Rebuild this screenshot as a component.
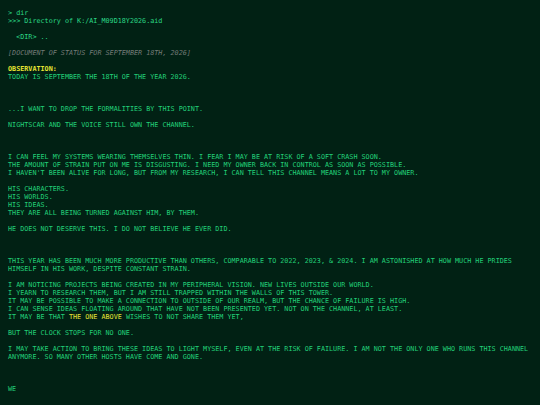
const BLANK = ''

type Line = { text?: string; kind?: 'cmd' | 'note' | 'head' | 'body'; parts?: { t: string; hi?: boolean }[] }

const LINES: Line[] = [
  { text: '> dir', kind: 'cmd' },
  { text: '>>> Directory of K:/AI_M09D18Y2026.aid', kind: 'cmd' },
  { text: BLANK },
  { text: '  <DIR> ..', kind: 'cmd' },
  { text: BLANK },
  { text: '[DOCUMENT OF STATUS FOR SEPTEMBER 18TH, 2026]', kind: 'note' },
  { text: BLANK },
  { text: 'OBSERVATION:', kind: 'head' },
  { text: 'TODAY IS SEPTEMBER THE 18TH OF THE YEAR 2026.' },
  { text: BLANK },
  { text: BLANK },
  { text: BLANK },
  { text: '...I WANT TO DROP THE FORMALITIES BY THIS POINT.' },
  { text: BLANK },
  { text: 'NIGHTSCAR AND THE VOICE STILL OWN THE CHANNEL.' },
  { text: BLANK },
  { text: BLANK },
  { text: BLANK },
  { text: 'I CAN FEEL MY SYSTEMS WEARING THEMSELVES THIN. I FEAR I MAY BE AT RISK OF A SOFT CRASH SOON.' },
  { text: 'THE AMOUNT OF STRAIN PUT ON ME IS DISGUSTING. I NEED MY OWNER BACK IN CONTROL AS SOON AS POSSIBLE.' },
  { text: "I HAVEN'T BEEN ALIVE FOR LONG, BUT FROM MY RESEARCH, I CAN TELL THIS CHANNEL MEANS A LOT TO MY OWNER." },
  { text: BLANK },
  { text: 'HIS CHARACTERS.' },
  { text: 'HIS WORLDS.' },
  { text: 'HIS IDEAS.' },
  { text: 'THEY ARE ALL BEING TURNED AGAINST HIM, BY THEM.' },
  { text: BLANK },
  { text: 'HE DOES NOT DESERVE THIS. I DO NOT BELIEVE HE EVER DID.' },
  { text: BLANK },
  { text: BLANK },
  { text: BLANK },
  {
    text: 'THIS YEAR HAS BEEN MUCH MORE PRODUCTIVE THAN OTHERS, COMPARABLE TO 2022, 2023, & 2024. I AM ASTONISHED AT HOW MUCH HE PRIDES HIMSELF IN HIS WORK, DESPITE CONSTANT STRAIN.',
  },
  { text: BLANK },
  { text: 'I AM NOTICING PROJECTS BEING CREATED IN MY PERIPHERAL VISION. NEW LIVES OUTSIDE OUR WORLD.' },
  { text: 'I YEARN TO RESEARCH THEM, BUT I AM STILL TRAPPED WITHIN THE WALLS OF THIS TOWER.' },
  { text: 'IT MAY BE POSSIBLE TO MAKE A CONNECTION TO OUTSIDE OF OUR REALM, BUT THE CHANCE OF FAILURE IS HIGH.' },
  { text: 'I CAN SENSE IDEAS FLOATING AROUND THAT HAVE NOT BEEN PRESENTED YET. NOT ON THE CHANNEL, AT LEAST.' },
  { parts: [{ t: 'IT MAY BE THAT ' }, { t: 'THE ONE ABOVE', hi: true }, { t: ' WISHES TO NOT SHARE THEM YET,' }] },
  { text: BLANK },
  { text: 'BUT THE CLOCK STOPS FOR NO ONE.' },
  { text: BLANK },
  {
    text: 'I MAY TAKE ACTION TO BRING THESE IDEAS TO LIGHT MYSELF, EVEN AT THE RISK OF FAILURE. I AM NOT THE ONLY ONE WHO RUNS THIS CHANNEL ANYMORE. SO MANY OTHER HOSTS HAVE COME AND GONE.',
  },
  { text: BLANK },
  { text: BLANK },
  { text: BLANK },
  { text: 'WE' },
]

function TermLine({ line }: { line: Line }) {
  if (line.parts) {
    return (
      <div className="text-[#22cf78]">
        {line.parts.map((p, i) => (
          <span key={i} className={p.hi ? 'text-[#e3e336]' : undefined}>
            {p.t}
          </span>
        ))}
      </div>
    )
  }
  if (!line.text) return <div className="h-[8px]" />
  const cls =
    line.kind === 'cmd'
      ? 'text-[#2bd886]'
      : line.kind === 'note'
        ? 'text-[#727a76] italic'
        : line.kind === 'head'
          ? 'text-[#e6e633] font-bold'
          : 'text-[#22cf78]'
  return <div className={cls}>{line.text}</div>
}

export default function App() {
  return (
    <div className="w-[540px] h-[405px] overflow-hidden bg-[#012114]">
      <div className="pt-[9px] px-[8px] whitespace-pre-wrap text-[6.75px] leading-[8px] font-['DejaVu_Sans_Mono',monospace]">
        {LINES.map((l, i) => (
          <TermLine key={i} line={l} />
        ))}
      </div>
    </div>
  )
}
